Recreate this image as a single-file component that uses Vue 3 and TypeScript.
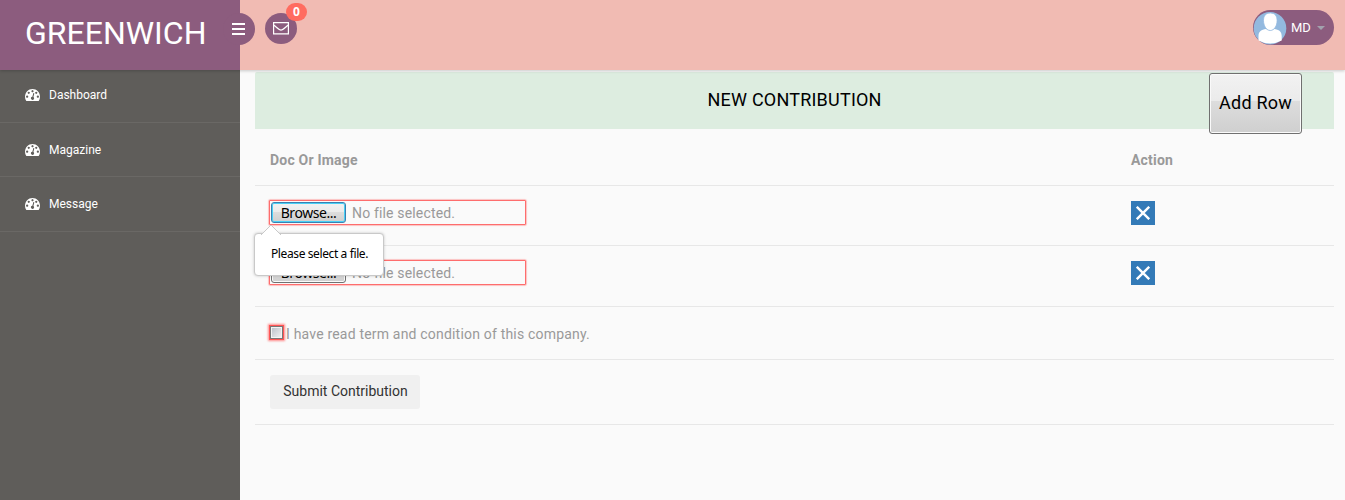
<script setup lang="ts">
import { ref } from 'vue'

const menu: string[] = ['Dashboard', 'Magazine', 'Message']
const rows = ref<{ id: number; active: boolean }[]>([
  { id: 1, active: true },
  { id: 2, active: false },
])
</script>

<template>
  <div class="page">
    <header class="topbar">
      <div class="brand"><span class="brand-name">GREENWICH</span></div>
      <div class="tools">
        <button class="round toggle" aria-label="Toggle menu">
          <svg width="13" height="12" viewBox="0 0 13 12"><path d="M0 1h13M0 6h13M0 11h13" stroke="#fff" stroke-width="2" /></svg>
        </button>
        <button class="round mail" aria-label="Messages">
          <svg width="16" height="13" viewBox="0 0 16 13" fill="none" stroke="#fff" stroke-width="1.2"><path d="M.6 .6h14.8v11.3H.6zM.7 3C4 5.7 6.2 8.2 8 8.2S12 5.7 15.3 3" /></svg>
          <span class="badge">0</span>
        </button>
      </div>
      <div class="profile">
        <svg class="avatar" width="34" height="34" viewBox="0 0 34 34">
          <circle cx="17" cy="17.2" r="16.300" fill="#93b9df" />
          <path d="M5.500 29.500V25C5.500 20.500 8.500 18.500 13 18q4 2.400 8 0C26 18.500 28.700 20.500 28.700 25V29.500Q23 32.500 17 32.500T5.500 29.500Z" fill="#fff" />
          <path d="M17.300 2c4.800 0 6.800 3 6.800 7.600s-2.500 9.900-6.800 9.900-6.800-5.300-6.800-9.900 2-7.600 6.800-7.600Z" fill="#fff" stroke="#93b9df" stroke-width=".8" />
        </svg>
        <span class="initials">MD</span>
        <i class="caret"></i>
      </div>
    </header>

    <div class="body">
      <nav class="sidebar">
        <a v-for="item in menu" :key="item" class="item">
          <svg width="15" height="12" viewBox="0 256 1792 1408" preserveAspectRatio="none"><path fill="#fff" d="M384 1152q0-53-37.500-90.500t-90.500-37.500-90.500 37.500-37.500 90.500 37.500 90.500 90.500 37.500 90.500-37.500 37.500-90.500zm192-448q0-53-37.500-90.500t-90.500-37.500-90.500 37.500-37.500 90.500 37.500 90.500 90.500 37.500 90.500-37.500 37.500-90.500zm428 481l101-382q6-26-7.500-48.500t-38.500-29.500-48 6.500-30 39.500l-101 382q-60 5-107 43.500t-63 98.500q-20 77 20 146t117 89 146-20 89-117q16-60-6-117t-72-91zm660-33q0-53-37.500-90.500t-90.500-37.500-90.500 37.500-37.500 90.500 37.500 90.500 90.500 37.500 90.500-37.500 37.500-90.500zm-640-640q0-53-37.500-90.500t-90.500-37.500-90.500 37.500-37.500 90.500 37.500 90.500 90.500 37.500 90.500-37.500 37.500-90.500zm448 192q0-53-37.500-90.500t-90.500-37.500-90.500 37.500-37.500 90.500 37.500 90.500 90.500 37.500 90.500-37.500 37.500-90.500zm320 448q0 261-141 483-19 29-54 29h-1402q-35 0-54-29-141-221-141-483 0-182 71-348t191-286 286-191 348-71 348 71 286 191 191 286 71 348z" /></svg>
          <span>{{ item }}</span>
        </a>
      </nav>

      <main class="content">
        <div class="panel-head">
          <h1>NEW CONTRIBUTION</h1>
          <button class="add">Add Row</button>
        </div>
        <div class="row head">
          <span>Doc Or Image</span>
          <span>Action</span>
        </div>
        <div v-for="(row, i) in rows" :key="row.id" class="row file-row" :class="{ tall: i === 1 }">
          <div class="file">
            <button class="browse" :class="{ focus: row.active }">Browse...</button>
            <span class="none">No file selected.</span>
            <div v-if="row.active" class="tip">
              <svg class="arrow" width="20" height="11" viewBox="0 0 20 11"><path d="M0 11 10 1 20 11" fill="#fff" stroke="#c9c9c9" /></svg>
              Please select a file.
            </div>
          </div>
          <button class="remove" aria-label="Remove row">
            <svg width="14" height="14" viewBox="0 0 14 14"><path d="M.8 .8l12.400 12.400M13.200 .8L.8 13.200" stroke="#fff" stroke-width="2.400" /></svg>
          </button>
        </div>
        <div class="row terms">
          <label><i class="check"></i><span>I have read term and condition of this company.</span></label>
        </div>
        <div class="row actions">
          <button class="submit">Submit Contribution</button>
        </div>
      </main>
    </div>
  </div>
</template>

<style>
body {
  margin: 0;
  background: #fafafa;
}
</style>

<style scoped>
* {
  box-sizing: border-box;
}
.page {
  height: 500px;
  overflow: hidden;
  display: flex;
  flex-direction: column;
  background: #fafafa;
  color: #999;
  font: 14px/20px Roboto, sans-serif;
}
button {
  font-family: inherit;
  padding: 0;
  border: 0;
}
svg {
  display: block;
}
.topbar {
  position: relative;
  z-index: 1;
  display: flex;
  flex: none;
  height: 70px;
  background: #f1bbb3;
  box-shadow: 0 1px 3px rgba(0, 0, 0, 0.2);
}
.brand {
  width: 240px;
  padding: 13px 0 0 25px;
  background: #8c5c7e;
}
.brand-name {
  display: block;
  color: #fff;
  font-size: 32px;
  line-height: 40px;
}
.tools {
  display: flex;
  gap: 10px;
  margin: 13px 0 0 -17px;
}
.round {
  position: relative;
  display: flex;
  align-items: center;
  justify-content: center;
  width: 32px;
  height: 32px;
  border-radius: 50%;
  background: #8c5c7e;
}
.mail {
  height: 31px;
}
.toggle {
  padding: 0 1px 1px 0;
}
.badge {
  position: absolute;
  top: -10px;
  left: 21px;
  width: 21px;
  height: 18px;
  border-radius: 9px;
  background: #ff6c60;
  color: #fff;
  font: bold 12px/18px "Open Sans", sans-serif;
  text-align: center;
}
.profile {
  display: flex;
  align-items: center;
  width: 81px;
  height: 35px;
  margin: 10px 11px 0 auto;
  border-radius: 18px;
  background: #8c5c7e;
}
.initials {
  margin-left: 4px;
  width: 21px;
  color: #fff;
  font-size: 13px;
}
.caret {
  margin: 1px 0 0 5px;
  border: 4px solid transparent;
  border-top-color: #a2a2ad;
  border-bottom: 0;
}
.body {
  display: flex;
  flex: 1;
}
.sidebar {
  width: 240px;
  background: #5f5d5a;
}
.item {
  display: flex;
  align-items: center;
  gap: 9px;
  height: 54.400px;
  padding: 0 0 1px 25px;
  border-bottom: 1px solid #6a6865;
  color: #fff;
  font-size: 12px;
}
.item:first-child {
  height: 53px;
  padding-bottom: 2px;
}
.item:nth-child(2) {
  padding-bottom: 0;
}
.content {
  flex: 1;
  padding: 2px 11px 0 15px;
}
.panel-head {
  display: flex;
  height: 57px;
  border-radius: 2px 2px 0 0;
  background: #ddede0;
  color: #000;
}
h1 {
  width: 204px;
  margin: 18px 0 0 452.500px;
  font-size: 18px;
  font-weight: 400;
  line-height: 20px;
  letter-spacing: 0.220px;
  white-space: nowrap;
}
.add {
  width: 93px;
  height: 61px;
  margin: 1px 32px 0 auto;
  padding-bottom: 2px;
  border: 1px solid #707070;
  border-radius: 3px;
  background: linear-gradient(#f2f2f2, #ebebeb 45%, #dddddd 46%, #cfcfcf);
  box-shadow: inset 0 0 0 1px #fafafa;
  color: #000;
  font-size: 18px;
  letter-spacing: 0.2px;
}
.row {
  display: grid;
  grid-template-columns: 861px 1fr;
  padding: 0 15px;
  border-bottom: 1px solid #e7e7e7;
}
.head {
  height: 57px;
  padding-top: 21px;
  font-weight: 700;
  letter-spacing: 0.2px;
}
.file-row {
  height: 60px;
  padding-top: 15px;
}
.tall {
  height: 61px;
}
.file {
  position: relative;
  display: flex;
  align-items: center;
  width: 255px;
  height: 23px;
  box-shadow: 0 0 1.500px 1px #ff3c3c;
}
.browse {
  width: 75px;
  height: 21px;
  margin-left: 1px;
  border: 1px solid #707070;
  border-radius: 3px;
  background: linear-gradient(#f2f2f2, #ebebeb 48%, #ddd 49%, #cfcfcf);
  box-shadow: inset 0 0 0 1px #fafafa;
  color: #000;
  font: 14px/18px "Noto Sans", sans-serif;
  letter-spacing: -0.450px;
}
.focus {
  border-color: #3c7fb1;
  box-shadow: inset 0 0 0 1px #49d0f5;
}
.none {
  padding-top: 1px;
  margin-left: 6px;
  font-size: 14px;
  letter-spacing: 0.160px;
}
.tip {
  position: absolute;
  z-index: 2;
  top: 32px;
  left: -16px;
  width: 130px;
  height: 43px;
  border: 1px solid #c9c9c9;
  border-radius: 4px;
  background: #fff;
  box-shadow: 0 0 3px rgba(0, 0, 0, 0.22);
  color: #000;
  font: 12px/40px "Noto Sans", sans-serif;
  letter-spacing: -0.390px;
  padding-left: 16px;
  white-space: nowrap;
}
.arrow {
  position: absolute;
  top: -10px;
  left: 6px;
}
.remove {
  display: grid;
  place-items: center;
  width: 24px;
  height: 24px;
  background: #337ab7;
}
.terms {
  height: 53px;
  padding-top: 17px;
}
.terms label {
  display: flex;
  letter-spacing: 0.190px;
}
.check {
  width: 13px;
  height: 13px;
  margin: 2px 3px 0 0;
  border: 1px solid #777;
  background: linear-gradient(135deg, #b9bec8, #f4f4f4);
  box-shadow: inset 0 0 0 1px #f4f4f4, 0 0 0 1px #f55, 0 0 2px 2px #ff8c8c;
}
.actions {
  height: 65px;
  padding-top: 15px;
}
.submit {
  width: 150px;
  height: 34px;
  padding: 0 0 2px 1px;
  border-radius: 3px;
  background: #f0f0f0;
  color: #333;
  font-size: 14px;
}
</style>
